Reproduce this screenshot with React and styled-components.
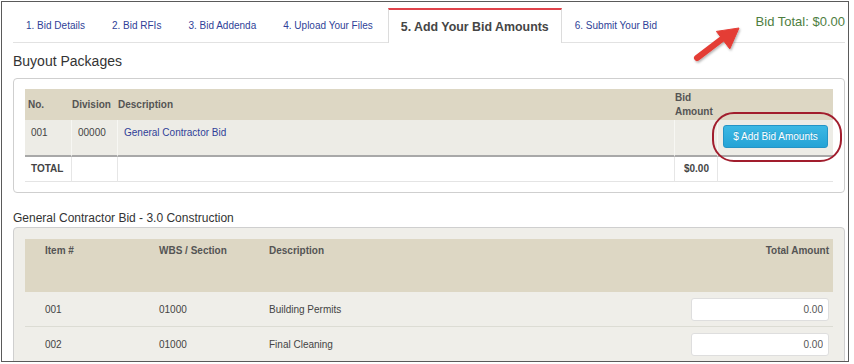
import React from "react";
import styled, { createGlobalStyle } from "styled-components";

const GlobalStyle = createGlobalStyle`
  html, body { margin: 0; padding: 0; background: #fff; }
  body { font-family: "Liberation Sans", Arial, Helvetica, sans-serif; }
  * { box-sizing: border-box; }
`;

const Frame = styled.div`
  position: relative;
  margin: 1px 0 0 1px;
  width: 848px;
  height: 361px;
  border: 1px solid #5a5a5a;
  overflow: hidden;
  padding: 0 3px 0 11px;
  background: #fff;
`;

const TabRow = styled.div`
  display: flex;
  margin-top: 6px;
  height: 35px;
  border-bottom: 1px solid #e2e2e2;
`;

const Tab = styled.div`
  display: flex;
  align-items: center;
  height: 34px;
  padding: 0 14px 0 13px;
  font-size: 10px;
  color: #2f3f98;
  white-space: nowrap;
`;

const ActiveTab = styled.div`
  display: flex;
  align-items: center;
  height: 35px;
  margin: 0 0 -1px 1px;
  padding: 1px 12px 0 12px;
  border: 1px solid #dcdcdc;
  border-top: 2px solid #e0434b;
  border-bottom: none;
  background: #fff;
  font-size: 12.4px;
  font-weight: bold;
  color: #454545;
  white-space: nowrap;
`;

const BidTotal = styled.div`
  margin-left: auto;
  align-self: flex-start;
  margin-top: 6px;
  font-size: 13px;
  line-height: 16px;
  color: #4e7e3f;
  white-space: nowrap;
`;

const Heading = styled.h2`
  margin: 9px 0 8px 0;
  font-size: 14px;
  line-height: 18px;
  font-weight: normal;
  color: #333;
`;

const SubHeading = styled.h3`
  margin: 17px 0 1px 0;
  font-size: 12px;
  line-height: 16px;
  font-weight: normal;
  color: #333;
`;

const Panel = styled.div`
  border: 1px solid #cfcfcf;
  border-radius: 4px;
  padding: ${(p) => p.$pad};
  background: ${(p) => p.$bg};
`;

const Table = styled.table`
  width: 808px;
  border-collapse: separate;
  border-spacing: 0;
  table-layout: fixed;
  font-size: 10px;
`;

const HeadRow = styled.tr`
  background: #ddd7c4;
`;

const Th = styled.th`
  height: ${(p) => p.$h}px;
  padding: ${(p) => p.$pad};
  text-align: ${(p) => p.$align || "left"};
  vertical-align: ${(p) => p.$valign || "middle"};
  font-weight: bold;
  line-height: 14px;
  color: #545454;
`;

const BodyRow = styled.tr`
  background: ${(p) => p.$bg};
`;

const Td = styled.td`
  height: ${(p) => p.$h}px;
  padding: ${(p) => p.$pad};
  vertical-align: ${(p) => p.$valign || "top"};
  text-align: ${(p) => p.$align || "left"};
  border-left: ${(p) => (p.$divider ? `1px solid ${p.$divider}` : "none")};
  border-bottom: ${(p) => p.$bottom || "none"};
  font-weight: ${(p) => (p.$bold ? "bold" : "normal")};
  line-height: 12px;
  color: #444;
`;

const Link = styled.a`
  color: #2f3f98;
  text-decoration: none;
`;

const AddButton = styled.button`
  display: block;
  width: 105px;
  height: 23px;
  padding: 0;
  border: 1px solid #2494c6;
  border-radius: 3px;
  background: linear-gradient(#3cb8e4, #25a3d6);
  color: #fff;
  font-family: inherit;
  font-size: 10px;
  text-shadow: 0 -1px 0 rgba(0, 0, 0, 0.15);
  cursor: pointer;
`;

const AmountInput = styled.input`
  display: block;
  width: 138px;
  height: 23px;
  margin-left: auto;
  padding: 0 5px;
  border: 1px solid #dedede;
  border-radius: 3px;
  background: #fff;
  font-family: inherit;
  font-size: 10px;
  color: #555;
  text-align: right;
`;

const Oval = styled.div`
  position: absolute;
  left: 710px;
  top: 110px;
  width: 130px;
  height: 50px;
  border: 2px solid #a11d2d;
  border-radius: 22px;
  pointer-events: none;
`;

const ArrowSvg = styled.svg`
  position: absolute;
  left: 684px;
  top: 18px;
  overflow: visible;
  pointer-events: none;
`;

const tabs = ["1. Bid Details", "2. Bid RFIs", "3. Bid Addenda", "4. Upload Your Files"];

const items = [
  { no: "001", wbs: "01000", desc: "Building Permits" },
  { no: "002", wbs: "01000", desc: "Final Cleaning" },
];

const ROW_LINE = "2px solid #a8a8a8";
const TOTAL_LINE = "1px solid #e4e4e4";
const ITEM_LINE = "1px solid #dcdcd4";

export default function App() {
  return (
    <>
      <GlobalStyle />
      <Frame>
        <TabRow>
          {tabs.map((t) => (
            <Tab key={t}>{t}</Tab>
          ))}
          <ActiveTab>5. Add Your Bid Amounts</ActiveTab>
          <Tab>6. Submit Your Bid</Tab>
          <BidTotal>Bid Total: $0.00</BidTotal>
        </TabRow>

        <Heading>Buyout Packages</Heading>
        <Panel $pad="10px 11px 10px" $bg="#fff">
          <Table>
            <colgroup>
              <col style={{ width: 46 }} />
              <col style={{ width: 46 }} />
              <col />
              <col style={{ width: 43 }} />
              <col style={{ width: 116 }} />
            </colgroup>
            <thead>
              <HeadRow>
                <Th $h={31} $pad="0 1px 0 3px">No.</Th>
                <Th $h={31} $pad="0 1px">Division</Th>
                <Th $h={31} $pad="0 1px">Description</Th>
                <Th $h={31} $pad="0 1px">Bid Amount</Th>
                <Th $h={31} $pad="0" />
              </HeadRow>
            </thead>
            <tbody>
              <BodyRow $bg="#edece6">
                <Td $h={37} $pad="7px 6px 0" $bottom={ROW_LINE}>001</Td>
                <Td $h={37} $pad="7px 6px 0" $divider="#f7f7f3" $bottom={ROW_LINE}>00000</Td>
                <Td $h={37} $pad="7px 6px 0" $divider="#f7f7f3" $bottom={ROW_LINE}>
                  <Link href="#">General Contractor Bid</Link>
                </Td>
                <Td $h={37} $pad="0" $divider="#f7f7f3" $bottom={ROW_LINE} />
                <Td $h={37} $pad="5px 5px 0" $divider="#f7f7f3" $bottom={ROW_LINE}>
                  <AddButton type="button">$ Add Bid Amounts</AddButton>
                </Td>
              </BodyRow>
              <BodyRow $bg="#fff">
                <Td $h={25} $pad="0 6px" $valign="middle" $bold $bottom={TOTAL_LINE}>TOTAL</Td>
                <Td $h={25} $pad="0" $divider="#e6e6e6" $bottom={TOTAL_LINE} />
                <Td $h={25} $pad="0" $divider="#e6e6e6" $bottom={TOTAL_LINE} />
                <Td
                  $h={25}
                  $pad="0 8px 0 0"
                  $valign="middle"
                  $align="right"
                  $bold
                  $divider="#e6e6e6"
                  $bottom={TOTAL_LINE}
                >
                  $0.00
                </Td>
                <Td $h={25} $pad="0" $divider="#e6e6e6" $bottom={TOTAL_LINE} />
              </BodyRow>
            </tbody>
          </Table>
        </Panel>

        <SubHeading>General Contractor Bid - 3.0 Construction</SubHeading>
        <Panel $pad="11px 11px" $bg="#efeee9">
          <Table>
            <colgroup>
              <col style={{ width: 114 }} />
              <col style={{ width: 110 }} />
              <col />
              <col style={{ width: 146 }} />
            </colgroup>
            <thead>
              <HeadRow>
                <Th $h={53} $pad="5px 0 0 20px" $valign="top">Item #</Th>
                <Th $h={53} $pad="5px 0 0 20px" $valign="top">WBS / Section</Th>
                <Th $h={53} $pad="5px 0 0 20px" $valign="top">Description</Th>
                <Th $h={53} $pad="5px 4px 0 0" $valign="top" $align="right">Total Amount</Th>
              </HeadRow>
            </thead>
            <tbody>
              {items.map((it) => (
                <BodyRow key={it.no} $bg="transparent">
                  <Td $h={35} $pad="2px 0 0 20px" $valign="middle" $bottom={ITEM_LINE}>{it.no}</Td>
                  <Td $h={35} $pad="2px 0 0 20px" $valign="middle" $bottom={ITEM_LINE}>{it.wbs}</Td>
                  <Td $h={35} $pad="2px 0 0 20px" $valign="middle" $bottom={ITEM_LINE}>{it.desc}</Td>
                  <Td $h={35} $pad="0 4px 0 0" $valign="middle" $bottom={ITEM_LINE}>
                    <AmountInput readOnly value="0.00" />
                  </Td>
                </BodyRow>
              ))}
            </tbody>
          </Table>
        </Panel>

        <Oval />
        <ArrowSvg width="60" height="50" viewBox="0 0 60 50">
          <defs>
            <filter id="arrowShadow" x="-30%" y="-30%" width="160%" height="160%">
              <feDropShadow dx="1" dy="1.5" stdDeviation="1.2" floodColor="#000" floodOpacity="0.3" />
            </filter>
          </defs>
          <g filter="url(#arrowShadow)" fill="#e43d36" stroke="#e43d36">
            <line x1="11" y1="38" x2="36" y2="19" strokeWidth="6" strokeLinecap="round" />
            <polygon points="53,8 43.8,28.9 30.4,11.4" strokeWidth="1" strokeLinejoin="round" />
          </g>
        </ArrowSvg>
      </Frame>
    </>
  );
}
